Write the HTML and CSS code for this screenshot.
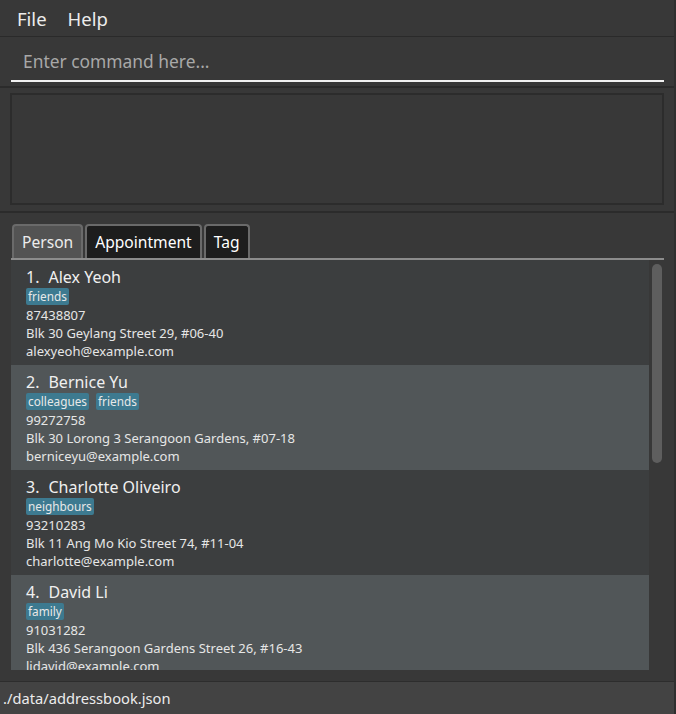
FILE: index.html
```html
<!DOCTYPE html>
<html lang="en">
<head>
    <meta charset="UTF-8">
    <title>Address App</title>
    <link rel="stylesheet" href="styles.css">
</head>
<body>
<div class="window">

    <!-- Menu -->
    <div class="menu-bar">
        <span class="menu-item">File</span>
        <span class="menu-item">Help</span>
    </div>

    <!-- Command box -->
    <div class="command-pane">
        <div class="command-field">Enter command here...</div>
    </div>

    <!-- Result display -->
    <div class="result-pane">
        <div class="result-box"></div>
    </div>

    <!-- Tabs and list -->
    <div class="list-pane">
        <div class="tab-header">
            <div class="tab tab-active">Person</div>
            <div class="tab">Appointment</div>
            <div class="tab">Tag</div>
        </div>

        <div class="list-view">
            <div class="list-cells">
                <div class="card card-odd">
                    <div class="card-name"><span class="card-index">1.</span>Alex Yeoh</div>
                    <div class="tags"><span class="tag">friends</span></div>
                    <div class="card-line">87438807</div>
                    <div class="card-line">Blk 30 Geylang Street 29, #06-40</div>
                    <div class="card-line">alexyeoh@example.com</div>
                </div>
                <div class="card card-even">
                    <div class="card-name"><span class="card-index">2.</span>Bernice Yu</div>
                    <div class="tags"><span class="tag">colleagues</span><span class="tag">friends</span></div>
                    <div class="card-line">99272758</div>
                    <div class="card-line">Blk 30 Lorong 3 Serangoon Gardens, #07-18</div>
                    <div class="card-line">berniceyu@example.com</div>
                </div>
                <div class="card card-odd">
                    <div class="card-name"><span class="card-index">3.</span>Charlotte Oliveiro</div>
                    <div class="tags"><span class="tag">neighbours</span></div>
                    <div class="card-line">93210283</div>
                    <div class="card-line">Blk 11 Ang Mo Kio Street 74, #11-04</div>
                    <div class="card-line">charlotte@example.com</div>
                </div>
                <div class="card card-even">
                    <div class="card-name"><span class="card-index">4.</span>David Li</div>
                    <div class="tags"><span class="tag">family</span></div>
                    <div class="card-line">91031282</div>
                    <div class="card-line">Blk 436 Serangoon Gardens Street 26, #16-43</div>
                    <div class="card-line">lidavid@example.com</div>
                </div>
            </div>
            <div class="scroll-track">
                <div class="scroll-thumb"></div>
            </div>
        </div>
    </div>

    <!-- Status bar -->
    <div class="status-bar">./data/addressbook.json</div>
</div>
</body>
</html>
```

FILE: styles.css
```css
html, body {
    margin: 0;
    height: 100%;
    overflow: hidden;
}

body {
    background-color: #383838;
    font-family: "Noto Sans", "Open Sans", sans-serif;
    color: #ffffff;
}

.window {
    display: flex;
    flex-direction: column;
    width: 676px;
    height: 714px;
    border-right: 2px solid #2f2f2f;
    box-sizing: border-box;
}

/* Menu bar */
.menu-bar {
    display: flex;
    gap: 21px;
    height: 36px;
    align-items: center;
    padding-left: 17px;
    border-bottom: 1px solid #2a2a2a;
}

.menu-item {
    font-size: 18.5px;
    color: #ececec;
}

/* Command box */
.command-pane {
    height: 49px;
    padding: 0 10px 0 11px;
    border-bottom: 2px solid #2b2b2b;
}

.command-field {
    height: 39px;
    display: flex;
    align-items: center;
    padding: 4px 0 0 12px;
    font-size: 17.4px;
    color: #a8a8a8;
    border-bottom: 2px solid #f2f2f2;
}

/* Result display */
.result-pane {
    padding: 5px 10px 6px 10px;
    border-bottom: 2px solid #2b2b2b;
}

.result-box {
    height: 108px;
    border: 2px solid #2c2c2c;
}

/* Tabs */
.list-pane {
    padding: 11px 10px 0 11px;
}

.tab-header {
    display: flex;
    gap: 2px;
    padding-left: 1px;
    height: 34px;
    border-bottom: 2px solid #8c8c8c;
}

.tab {
    display: flex;
    align-items: center;
    padding: 0 8px;
    font-size: 15.6px;
    color: #ffffff;
    background-color: #1d1d1d;
    border: 2px solid #6a6a6a;
    border-bottom: none;
    border-radius: 4px 4px 0 0;
}

.tab-active {
    background-color: #535353;
    color: #ececec;
}

/* Person list */
.list-view {
    display: flex;
    height: 410px;
    overflow: hidden;
}

.list-cells {
    flex: 1;
}

.card {
    height: 105px;
    box-sizing: border-box;
    padding: 7px 0 0 15px;
    color: #e6e6e6;
}

.card-odd {
    background-color: #3c3e3f;
}

.card-even {
    background-color: #515658;
}

.card-name {
    font-size: 16px;
    line-height: 20px;
    color: #f0f0f0;
}

.card-index {
    margin-right: 9px;
}

.tags {
    display: flex;
    gap: 7px;
    margin-top: 1px;
    height: 17px;
}

.tag {
    background-color: #3d7a90;
    border-radius: 2px;
    padding: 0 2px;
    font-size: 11.8px;
    line-height: 17px;
    color: #e8e8e8;
}

.card-line {
    font-size: 13px;
    line-height: 18px;
}

.tags + .card-line {
    margin-top: 1px;
}

.scroll-track {
    width: 15px;
    padding: 4px 2px 0 3px;
    box-sizing: border-box;
}

.scroll-thumb {
    height: 199px;
    background-color: #5e5e5e;
    border-radius: 5px;
}

/* Status bar */
.status-bar {
    margin-top: auto;
    height: 32px;
    display: flex;
    align-items: center;
    padding-left: 3px;
    font-size: 14.7px;
    color: #ececec;
    background-color: #434343;
    border-top: 1px solid #2d2d2d;
}
```
